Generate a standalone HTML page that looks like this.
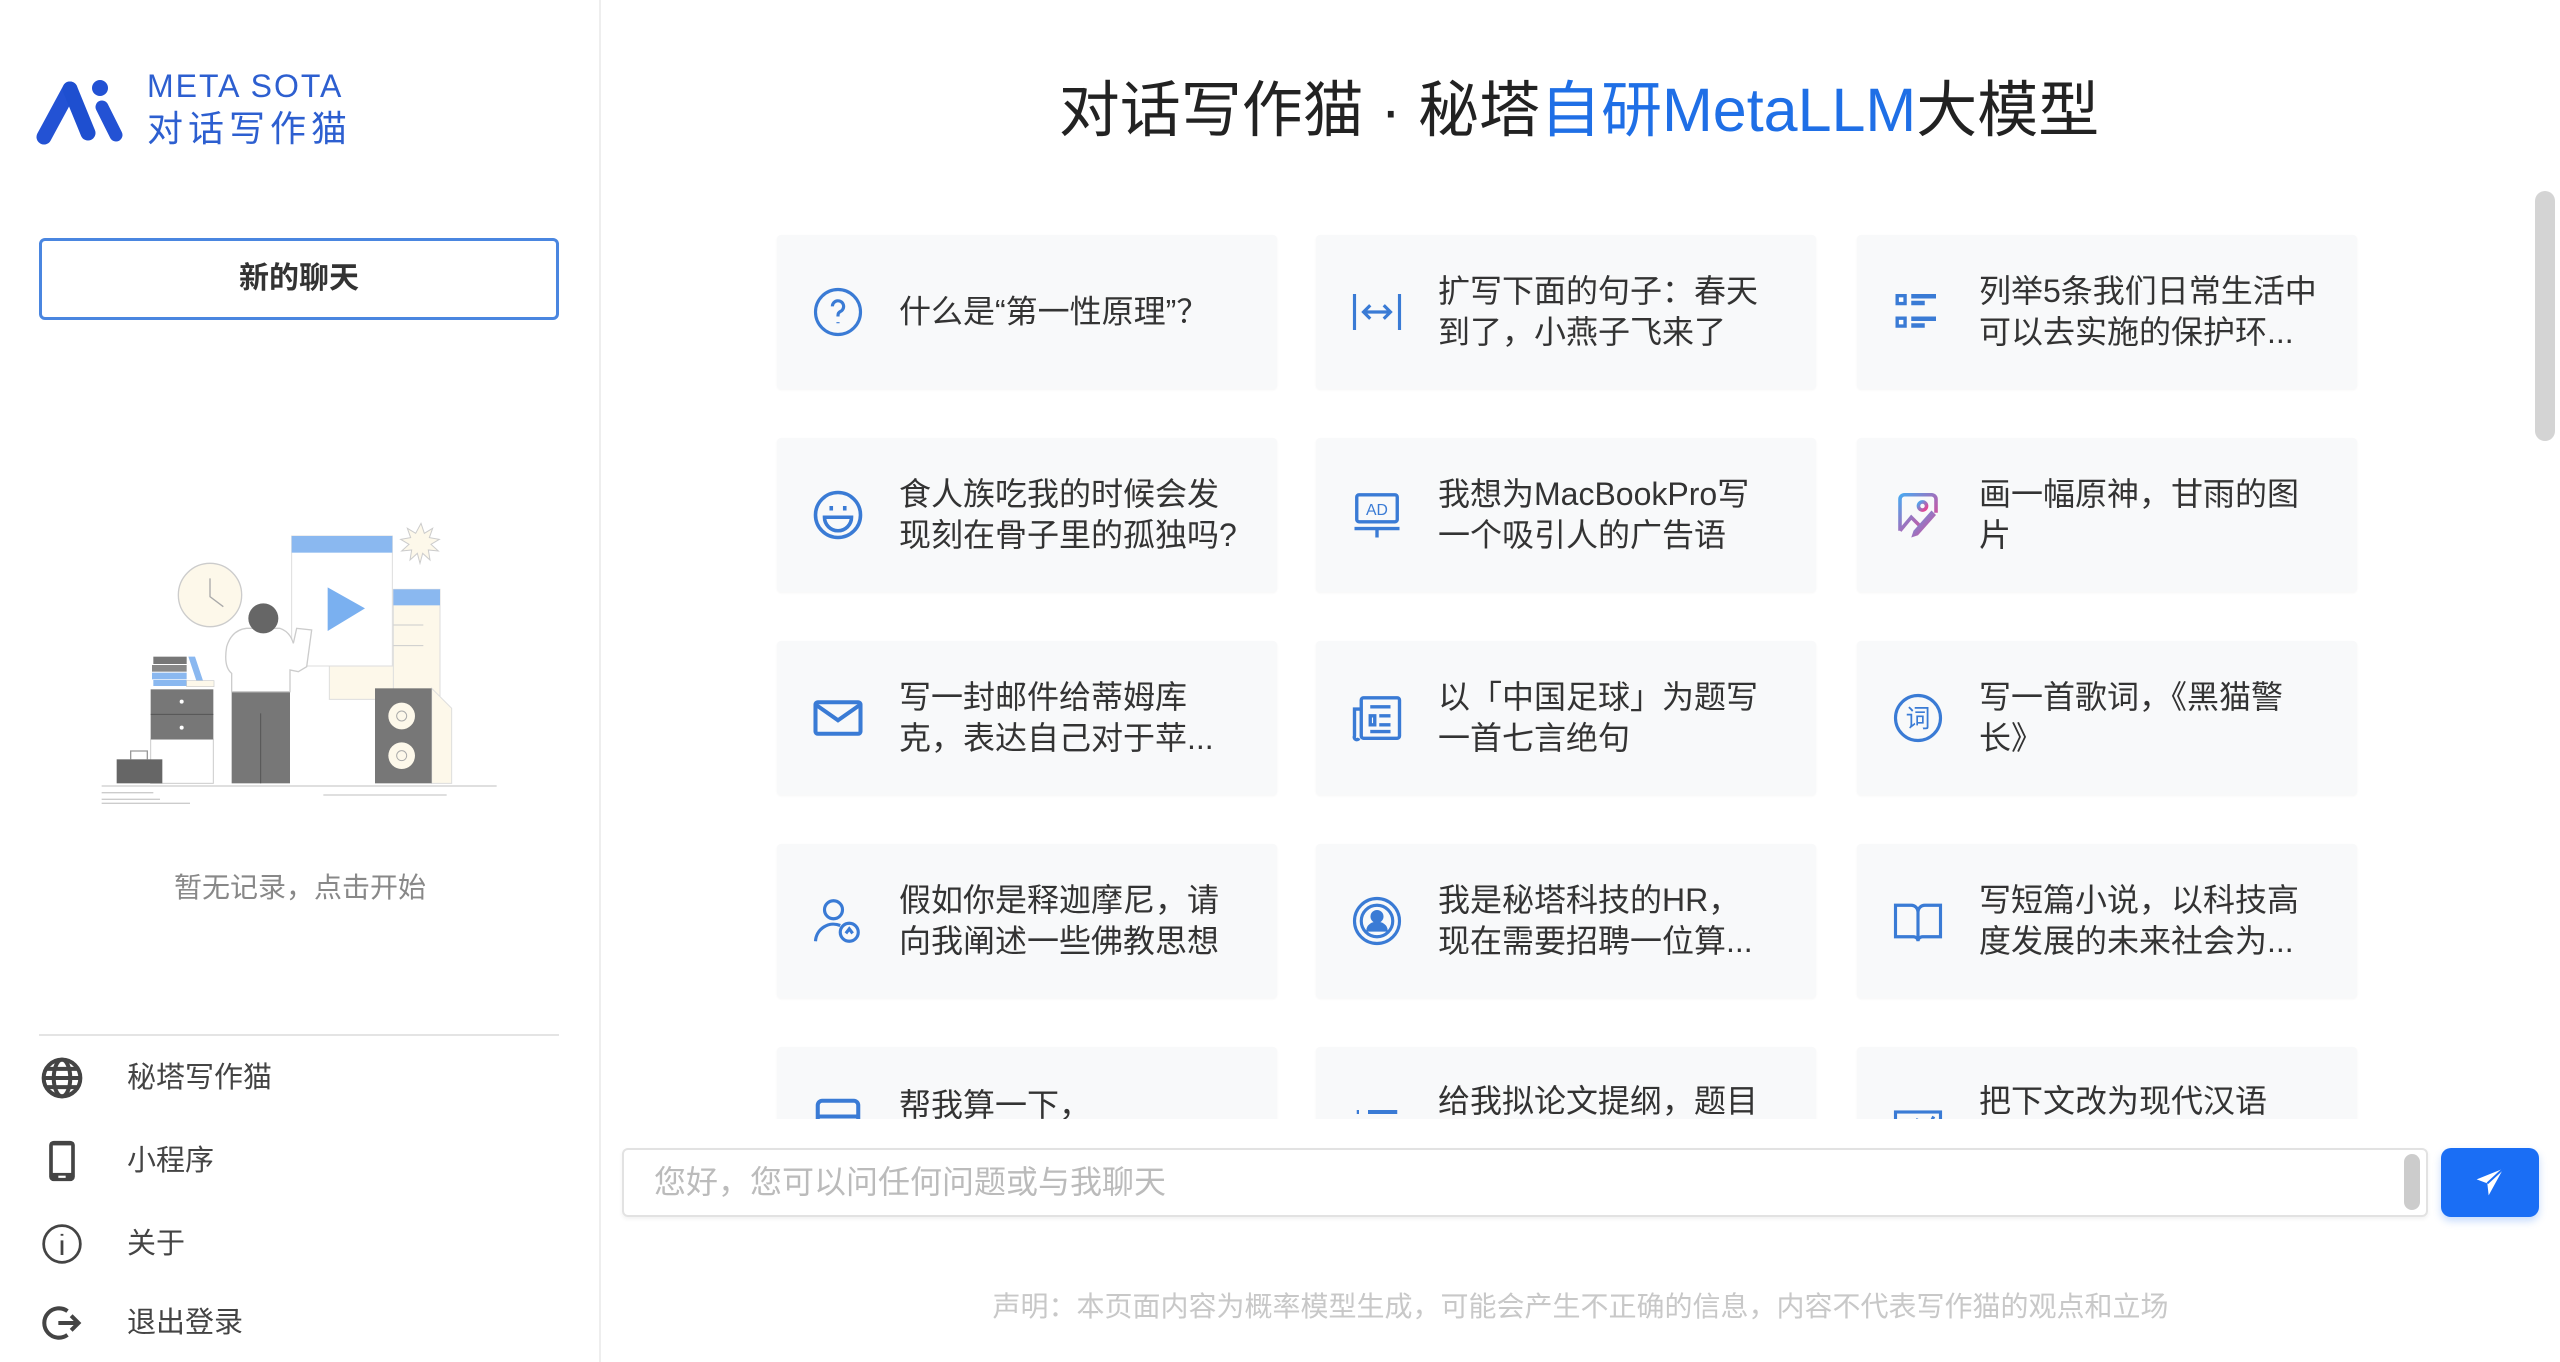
<!DOCTYPE html>
<html><head><meta charset="utf-8">
<style>
*{margin:0;padding:0;box-sizing:border-box}
body{width:2560px;height:1362px;overflow:hidden;background:#fff;font-family:"Liberation Sans","Noto Sans CJK SC",sans-serif;position:relative}
.side{position:absolute;left:0;top:0;width:601px;height:1362px;border-right:2px solid #eee;background:#fff}
.abs{position:absolute}
.btn{left:39px;top:238px;width:520px;height:82px;border:3px solid #4a86e0;border-radius:6px;text-align:center;line-height:76px;font-size:30px;font-weight:bold;color:#333}
.menu{left:127px;font-size:29px;color:#444;line-height:40px}
.mi{left:40px;width:44px;height:44px}
.title{left:0;width:3158px;text-align:center;top:70px;font-size:61px;color:#222;line-height:80px}
.card{position:absolute;width:500px;height:154px;background:#f8f9fa;border-radius:4px;box-shadow:0 1px 2px rgba(0,0,0,.04)}
.card svg{position:absolute;left:34px;top:50%;margin-top:-27px;width:54px;height:54px}
.card .t{position:absolute;left:122px;right:28px;top:50%;transform:translateY(-50%);font-size:32px;line-height:41px;color:#333}
.card svg.lo{top:47px;margin-top:0}
</style></head><body>
<div class="side">
 <svg class="abs" style="left:36px;top:75px" width="100" height="72" viewBox="0 0 100 72">
  <path d="M8 62 L34 14" stroke="#2352d4" stroke-width="15" stroke-linecap="round"/>
  <path d="M34 14 L52 58" stroke="#1e4fd0" stroke-width="15" stroke-linecap="round"/>
  <circle cx="64" cy="13" r="8" fill="#2352d4"/>
  <path d="M66 32 L80 60" stroke="#2352d4" stroke-width="13" stroke-linecap="round"/>
 </svg>
 <div class="abs" style="left:147px;top:68px;font-size:32px;color:#2d5fd0;letter-spacing:2px;line-height:36px">META SOTA</div>
 <div class="abs" style="left:147px;top:106px;font-size:36px;color:#2d5fd0;letter-spacing:5px;line-height:46px">对话写作猫</div>
 <div class="abs btn">新的聊天</div>
 <svg class="abs" style="left:60px;top:500px" width="460" height="320" viewBox="0 0 1380 960">
  <g stroke="#ccc" stroke-width="4">
  <line x1="125" y1="858" x2="1310" y2="858"/><line x1="125" y1="878" x2="280" y2="878"/><line x1="125" y1="898" x2="300" y2="898"/><line x1="125" y1="910" x2="390" y2="910"/><line x1="790" y1="885" x2="1160" y2="885"/>
  </g>
  <circle cx="450" cy="285" r="95" fill="#fdf8ea" stroke="#ccc" stroke-width="4"/>
  <path d="M450 235 L450 290 L490 320" stroke="#aaa" stroke-width="4" fill="none"/>
  <rect x="808" y="498" width="332" height="100" fill="#fdf8ea" stroke="#ddd" stroke-width="3"/>
  <rect x="1000" y="268" width="140" height="330" fill="#fdf8ea" stroke="#ddd" stroke-width="3"/>
  <rect x="1000" y="268" width="140" height="48" fill="#8ab8f0"/>
  <g stroke="#ccc" stroke-width="3"><line x1="1000" y1="375" x2="1090" y2="375"/><line x1="1000" y1="437" x2="1090" y2="437"/></g>
  <rect x="695" y="108" width="302" height="390" fill="#fff" stroke="#ddd" stroke-width="3"/>
  <rect x="695" y="108" width="302" height="50" fill="#8ab8f0"/>
  <path d="M803 262 L915 325 L803 393Z" fill="#7ab0f0"/>
  <path d="M1083 70 l10 30 25-15-10 28 30 5-25 15 22 20-30-3 5 30-22-20-8 30-8-30-22 20 5-30-30 3 22-20-25-15 30-5-10-28 25 15z" fill="#fdf8ea" stroke="#ccc" stroke-width="3"/>
  <path d="M1115 565 L1175 625 L1175 850 L1115 850Z" fill="#fdf8ea" stroke="#ddd" stroke-width="3"/>
  <rect x="945" y="565" width="170" height="285" fill="#777"/>
  <circle cx="1025" cy="648" r="40" fill="#fdf8ea"/><circle cx="1025" cy="648" r="15" fill="none" stroke="#aaa" stroke-width="3"/>
  <circle cx="1025" cy="767" r="40" fill="#fdf8ea"/><circle cx="1025" cy="767" r="15" fill="none" stroke="#aaa" stroke-width="3"/>
  <rect x="272" y="718" width="188" height="132" fill="#fff" stroke="#ccc" stroke-width="3"/>
  <rect x="272" y="568" width="188" height="150" fill="#777"/>
  <line x1="272" y1="643" x2="460" y2="643" stroke="#555" stroke-width="3"/>
  <circle cx="365" cy="605" r="6" fill="#fff"/><circle cx="365" cy="683" r="6" fill="#fff"/>
  <rect x="280" y="470" width="100" height="22" fill="#777"/><rect x="276" y="495" width="104" height="20" fill="#888"/>
  <rect x="276" y="518" width="104" height="20" fill="#8ab8f0"/><rect x="280" y="540" width="100" height="18" fill="#8ab8f0"/>
  <path d="M385 470 L405 470 L430 545 L410 545Z" fill="#8ab8f0"/>
  <rect x="380" y="542" width="82" height="18" fill="#fdf8ea" stroke="#ccc" stroke-width="2"/>
  <rect x="170" y="778" width="137" height="72" fill="#666"/>
  <path d="M212 778 v-25 h50 v25" fill="none" stroke="#999" stroke-width="4"/>
  <rect x="515" y="575" width="175" height="275" fill="#777"/>
  <line x1="602" y1="640" x2="602" y2="850" stroke="#555" stroke-width="3"/>
  <path d="M515 575 L515 520 Q490 500 500 440 Q515 390 560 385 L660 385 Q690 395 700 430 L710 385 L755 390 L740 500 L715 515 L690 510 L690 575Z" fill="#fff" stroke="#ccc" stroke-width="4"/>
  <circle cx="610" cy="355" r="45" fill="#666"/>
 </svg>
 <div class="abs" style="left:0;width:600px;top:866px;text-align:center;font-size:28px;color:#888">暂无记录，点击开始</div>
 <div class="abs" style="left:39px;top:1034px;width:520px;height:2px;background:#e4e4e4"></div>
 <svg class="abs mi" style="top:1056px" viewBox="0 0 24 24" fill="none" stroke="#444" stroke-width="2.2"><circle cx="12" cy="12" r="10"/><ellipse cx="12" cy="12" rx="4.5" ry="10"/><path d="M2 12h20M4 7h16M4 17h16"/></svg>
 <div class="abs menu" style="top:1058px">秘塔写作猫</div>
 <svg class="abs mi" style="top:1139px" viewBox="0 0 24 24"><rect x="5" y="1" width="14" height="22" rx="2.5" fill="#444"/><rect x="7" y="3.5" width="10" height="15" fill="#fff"/><rect x="10" y="20" width="4" height="1.2" fill="#fff"/></svg>
 <div class="abs menu" style="top:1141px">小程序</div>
 <svg class="abs mi" style="top:1222px" viewBox="0 0 24 24" fill="none" stroke="#444" stroke-width="1.5"><circle cx="12" cy="12" r="10"/><path d="M12 10v8M12 6.5v1"/></svg>
 <div class="abs menu" style="top:1224px">关于</div>
 <svg class="abs mi" style="top:1301px" viewBox="0 0 24 24" fill="none" stroke="#444" stroke-width="2.2"><path d="M15 5.5A8 8 0 1 0 15 18.5"/><path d="M10 12h11M17 8l4 4-4 4"/></svg>
 <div class="abs menu" style="top:1303px">退出登录</div>
</div>

<div class="abs title">对话写作猫 · 秘塔<span style="color:#1f6fe6">自研MetaLLM</span>大模型</div>

<div class="abs" style="left:770px;top:220px;width:1600px;height:899px;overflow:hidden">
<div style="position:relative;left:7px;top:15px">
 <div class="card" style="left:0;top:0"><svg viewBox="0 0 24 24" fill="none" stroke="#3a7bd5" stroke-width="1.4"><circle cx="12" cy="12" r="10"/><path d="M9.5 9.5a2.5 2.5 0 1 1 3.5 2.3c-.7.4-1 1-1 1.7v.5M12 16.5v.5"/></svg><div class="t">什么是“第一性原理”？</div></div>
 <div class="card" style="left:539px;top:0"><svg viewBox="0 0 24 24" fill="none" stroke="#3a7bd5" stroke-width="1.4"><path d="M2 4v16M22 4v16M6 12h12M9 9l-3 3 3 3M15 9l3 3-3 3"/></svg><div class="t">扩写下面的句子：春天<br>到了，小燕子飞来了</div></div>
 <div class="card" style="left:1080px;top:0"><svg viewBox="0 0 24 24" fill="#3a7bd5"><rect x="2" y="4" width="5" height="5"/><rect x="9" y="4" width="11" height="2"/><rect x="9" y="7" width="6" height="2"/><rect x="2" y="14" width="5" height="5"/><rect x="9" y="14" width="11" height="2"/><rect x="9" y="17" width="6" height="2"/><rect x="3.5" y="5.5" width="2" height="2" fill="#fff"/><rect x="3.5" y="15.5" width="2" height="2" fill="#fff"/></svg><div class="t" style="white-space:nowrap">列举5条我们日常生活中<br>可以去实施的保护环...</div></div>

 <div class="card" style="left:0;top:203px"><svg viewBox="0 0 24 24" fill="none" stroke="#3a7bd5" stroke-width="1.6"><circle cx="12" cy="12" r="10"/><path d="M9 8v2M15 8v2M6 13h12a6 6 0 0 1-12 0z"/></svg><div class="t" style="white-space:nowrap">食人族吃我的时候会发<br>现刻在骨子里的孤独吗?</div></div>
 <div class="card" style="left:539px;top:203px"><svg viewBox="0 0 24 24" fill="none" stroke="#3a7bd5" stroke-width="1.5"><rect x="3" y="3" width="18" height="12" rx="1"/><text x="12" y="12" font-size="7" text-anchor="middle" fill="#3a7bd5" stroke="none" font-family="Liberation Sans">AD</text><path d="M2 18h20M12 18v4"/></svg><div class="t" style="white-space:nowrap">我想为MacBookPro写<br>一个吸引人的广告语</div></div>
 <div class="card" style="left:1080px;top:203px"><svg viewBox="0 0 24 24" fill="none" stroke-width="1.6"><defs><linearGradient id="g" x1="0" y1="0" x2="1" y2="1"><stop offset="0" stop-color="#4aa8f0"/><stop offset="1" stop-color="#f03c8c"/></linearGradient></defs><path d="M4 19V5a2 2 0 0 1 2-2h12a2 2 0 0 1 2 2v6M4 19l5-6 4 4" stroke="url(#g)"/><circle cx="14" cy="8" r="1.8" stroke="url(#g)"/><path d="M20 12l-8 9-3 1 1-3 8-9z" fill="url(#g)"/></svg><div class="t">画一幅原神，甘雨的图<br>片</div></div>

 <div class="card" style="left:0;top:406px"><svg viewBox="0 0 24 24" fill="none" stroke="#3a7bd5" stroke-width="1.8"><rect x="2" y="5" width="20" height="14" rx="1"/><path d="M2 6l10 7 10-7"/></svg><div class="t" style="white-space:nowrap">写一封邮件给蒂姆库<br>克，表达自己对于苹...</div></div>
 <div class="card" style="left:539px;top:406px"><svg viewBox="0 0 24 24" fill="none" stroke="#3a7bd5" stroke-width="1.5"><rect x="5" y="3" width="17" height="18" rx="1"/><path d="M5 8H2v12a1 1 0 0 0 2 1M9 7h9M13 11h5M13 15h5M9 11h2v4H9zM9 18h9"/></svg><div class="t" style="white-space:nowrap">以「中国足球」为题写<br>一首七言绝句</div></div>
 <div class="card" style="left:1080px;top:406px"><svg viewBox="0 0 24 24" fill="none" stroke="#3a7bd5" stroke-width="1.4"><circle cx="12" cy="12" r="10"/><text x="12" y="16" font-size="11" text-anchor="middle" fill="#3a7bd5" stroke="none" font-family="Noto Sans CJK SC">词</text></svg><div class="t" style="white-space:nowrap">写一首歌词，《黑猫警<br>长》</div></div>

 <div class="card" style="left:0;top:609px"><svg viewBox="0 0 24 24" fill="none" stroke="#3a7bd5" stroke-width="1.4"><circle cx="10" cy="7" r="4"/><path d="M2 21a8 8 0 0 1 11-7"/><circle cx="17" cy="17" r="4"/><path d="M15.5 17.5l1.5-2 1.5 2"/></svg><div class="t" style="white-space:nowrap">假如你是释迦摩尼，请<br>向我阐述一些佛教思想</div></div>
 <div class="card" style="left:539px;top:609px"><svg viewBox="0 0 24 24" fill="none" stroke="#3a7bd5" stroke-width="1.4"><circle cx="12" cy="12" r="10"/><circle cx="12" cy="12" r="7"/><circle cx="12" cy="10" r="2.2" fill="#3a7bd5"/><path d="M8 16a4 3 0 0 1 8 0z" fill="#3a7bd5"/></svg><div class="t" style="white-space:nowrap">我是秘塔科技的HR，<br>现在需要招聘一位算...</div></div>
 <div class="card" style="left:1080px;top:609px"><svg viewBox="0 0 24 24" fill="none" stroke="#3a7bd5" stroke-width="1.4"><path d="M2 5h7a3 3 0 0 1 3 3v13a2 2 0 0 0-2-2H2zM22 5h-7a3 3 0 0 0-3 3v13a2 2 0 0 1 2-2h8z"/></svg><div class="t" style="white-space:nowrap">写短篇小说，以科技高<br>度发展的未来社会为...</div></div>

 <div class="card" style="left:0;top:812px"><svg class="lo" viewBox="0 0 24 24" fill="none" stroke="#3a7bd5" stroke-width="1.8"><rect x="3" y="3" width="18" height="18" rx="2"/><path d="M3 10h18M7 14h1M11 14h1M15 14h1M7 17h1M11 17h1M15 17h1"/></svg><div class="t" style="top:38px;transform:none">帮我算一下，</div></div>
 <div class="card" style="left:539px;top:812px"><svg class="lo" viewBox="0 0 24 24" fill="none" stroke="#3a7bd5" stroke-width="1.8"><path d="M3 8h1M8 8h13M3 14h1M8 14h13M3 20h1M8 20h13"/></svg><div class="t" style="top:34px;transform:none">给我拟论文提纲，题目</div></div>
 <div class="card" style="left:1080px;top:812px"><svg class="lo" viewBox="0 0 24 24" fill="none" stroke="#3a7bd5" stroke-width="1.4"><rect x="2" y="8" width="20" height="14"/><path d="M6 12l3 5 3-6M14 12l2 4 3-6"/></svg><div class="t" style="top:34px;transform:none">把下文改为现代汉语</div></div>
</div>
</div>

<div class="abs" style="left:622px;top:1148px;width:1806px;height:69px;border:2px solid #e2e2e2;border-radius:6px;box-shadow:0 2px 4px rgba(0,0,0,.06)">
 <div class="abs" style="left:30px;top:10px;font-size:32px;color:#bbb;line-height:45px">您好，您可以问任何问题或与我聊天</div>
 <div class="abs" style="right:6px;top:4px;width:16px;height:56px;background:#ccc;border-radius:8px"></div>
</div>
<div class="abs" style="left:2441px;top:1148px;width:98px;height:69px;background:#1a6ef5;border-radius:10px;box-shadow:0 4px 8px rgba(26,110,245,.25)">
 <svg class="abs" style="left:33px;top:18px" width="32" height="32" viewBox="0 0 24 24"><path d="M22 2L2 10l8 3 1 9z" fill="#fff"/><path d="M22 2L10 13" stroke="#1a6ef5" stroke-width="1.5"/></svg>
</div>
<div class="abs" style="left:601px;width:1959px;text-align:center;top:1285px;font-size:28px;color:#c8c8c8">声明：本页面内容为概率模型生成，可能会产生不正确的信息，内容不代表写作猫的观点和立场</div>
<div class="abs" style="left:2535px;top:191px;width:20px;height:250px;background:#d4d4d4;border-radius:10px"></div>
</body></html>
